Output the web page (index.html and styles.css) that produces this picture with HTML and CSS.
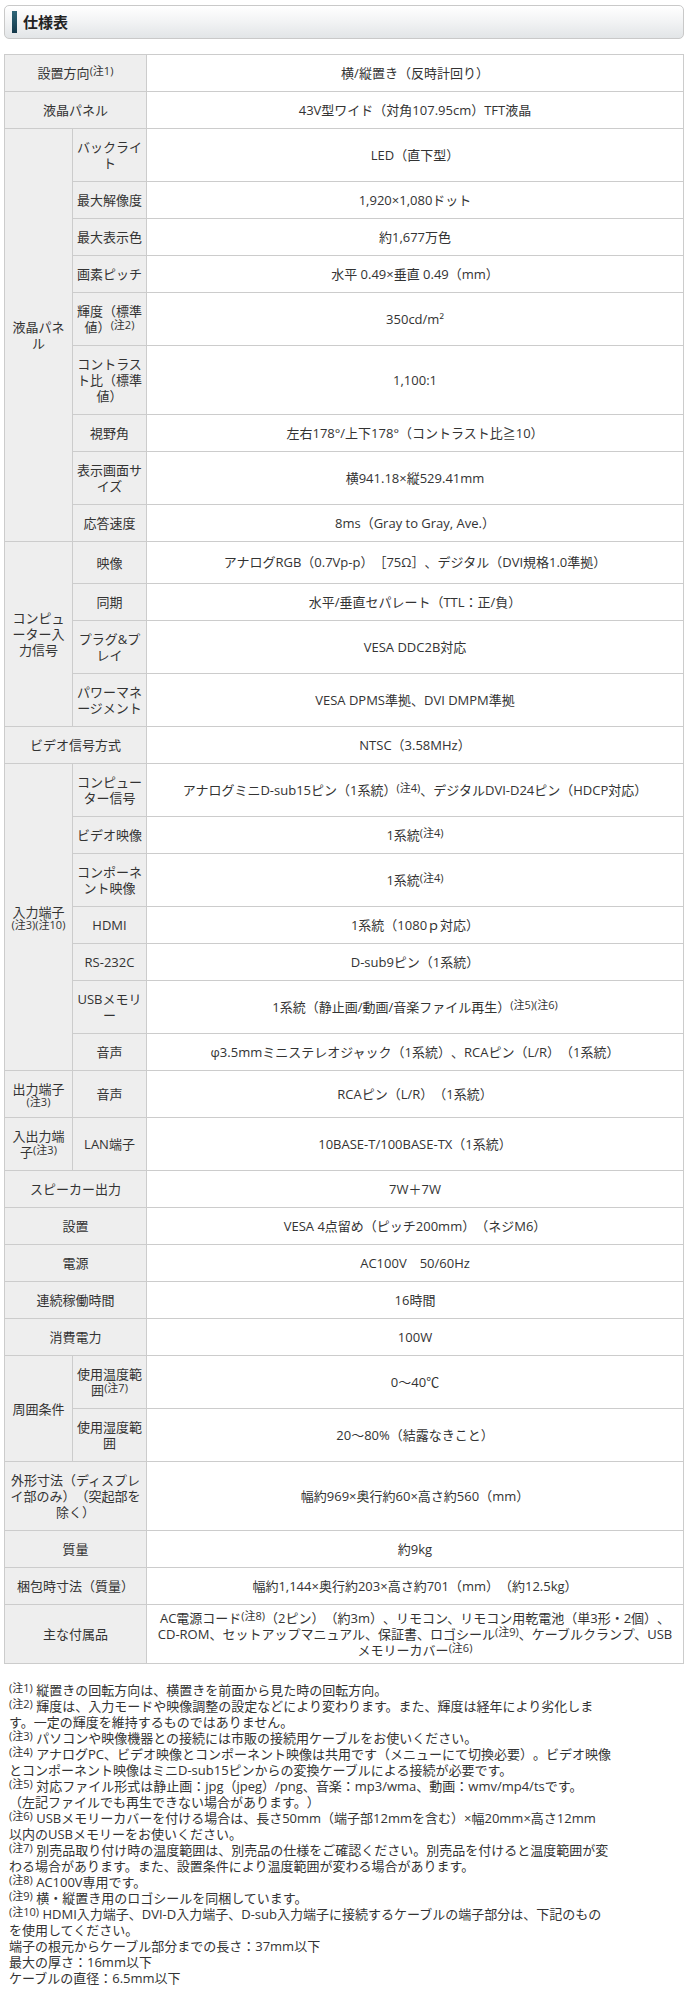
FILE: index.html
```html
<!DOCTYPE html>
<html lang="ja">
<head>
<meta charset="utf-8">
<title>仕様表</title>
<link rel="stylesheet" href="styles.css">
</head>
<body>
<div class="page">
  <div class="heading">
    <span class="heading-bar"></span>
    <h2 class="heading-title">仕様表</h2>
  </div>

  <table class="spec">
    <colgroup><col class="c1"><col class="c2"><col class="c3"></colgroup>
    <tbody>
      <tr><th colspan="2">設置方向<sup class="n">(注1)</sup></th><td>横/縦置き（反時計回り）</td></tr>
      <tr><th colspan="2">液晶パネル</th><td>43V型ワイド（対角107.95cm）TFT液晶</td></tr>
      <tr><th rowspan="9">液晶パネ<br>ル</th><th>バックライ<br>ト</th><td>LED（直下型）</td></tr>
      <tr><th>最大解像度</th><td>1,920×1,080ドット</td></tr>
      <tr><th>最大表示色</th><td>約1,677万色</td></tr>
      <tr><th>画素ピッチ</th><td>水平 0.49×垂直 0.49（mm）</td></tr>
      <tr><th>輝度（標準<br>値）<sup class="n">(注2)</sup></th><td>350cd/m²</td></tr>
      <tr><th>コントラス<br>ト比（標準<br>値）</th><td>1,100:1</td></tr>
      <tr><th>視野角</th><td>左右178°/上下178°（コントラスト比≧10）</td></tr>
      <tr><th>表示画面サ<br>イズ</th><td>横941.18×縦529.41mm</td></tr>
      <tr><th>応答速度</th><td>8ms（Gray to Gray, Ave.）</td></tr>
      <tr><th rowspan="4">コンピュ<br>ーター入<br>力信号</th><th>映像</th><td class="tall">アナログRGB（0.7Vp-p）［75Ω］、デジタル（DVI規格1.0準拠）</td></tr>
      <tr><th>同期</th><td>水平/垂直セパレート（TTL：正/負）</td></tr>
      <tr><th>プラグ&amp;プ<br>レイ</th><td>VESA DDC2B対応</td></tr>
      <tr><th>パワーマネ<br>ージメント</th><td>VESA DPMS準拠、DVI DMPM準拠</td></tr>
      <tr><th colspan="2">ビデオ信号方式</th><td>NTSC（3.58MHz）</td></tr>
      <tr><th rowspan="7">入力端子<span class="n-blk">(注3)(注10)</span></th><th>コンピュー<br>ター信号</th><td>アナログミニD-sub15ピン（1系統）<sup class="n">(注4)</sup>、デジタルDVI-D24ピン（HDCP対応）</td></tr>
      <tr><th>ビデオ映像</th><td>1系統<sup class="n">(注4)</sup></td></tr>
      <tr><th>コンポーネ<br>ント映像</th><td>1系統<sup class="n">(注4)</sup></td></tr>
      <tr><th>HDMI</th><td>1系統（1080ｐ対応）</td></tr>
      <tr><th>RS-232C</th><td>D-sub9ピン（1系統）</td></tr>
      <tr><th>USBメモリ<br>ー</th><td>1系統（静止画/動画/音楽ファイル再生）<sup class="n">(注5)(注6)</sup></td></tr>
      <tr><th>音声</th><td>φ3.5mmミニステレオジャック（1系統）、RCAピン（L/R）（1系統）</td></tr>
      <tr><th>出力端子<span class="n-blk">(注3)</span></th><th>音声</th><td>RCAピン（L/R）（1系統）</td></tr>
      <tr><th>入出力端<br>子<sup class="n">(注3)</sup></th><th>LAN端子</th><td>10BASE-T/100BASE-TX（1系統）</td></tr>
      <tr><th colspan="2">スピーカー出力</th><td>7W＋7W</td></tr>
      <tr><th colspan="2">設置</th><td>VESA 4点留め（ピッチ200mm）（ネジM6）</td></tr>
      <tr><th colspan="2">電源</th><td>AC100V　50/60Hz</td></tr>
      <tr><th colspan="2">連続稼働時間</th><td>16時間</td></tr>
      <tr><th colspan="2">消費電力</th><td>100W</td></tr>
      <tr><th rowspan="2">周囲条件</th><th>使用温度範<br>囲<sup class="n">(注7)</sup></th><td>0～40℃</td></tr>
      <tr><th>使用湿度範<br>囲</th><td>20～80%（結露なきこと）</td></tr>
      <tr><th colspan="2">外形寸法（ディスプレ<br>イ部のみ）（突起部を<br>除く）</th><td>幅約969×奥行約60×高さ約560（mm）</td></tr>
      <tr><th colspan="2">質量</th><td>約9kg</td></tr>
      <tr><th colspan="2">梱包時寸法（質量）</th><td>幅約1,144×奥行約203×高さ約701（mm）（約12.5kg）</td></tr>
      <tr><th colspan="2">主な付属品</th><td class="compact">AC電源コード<sup class="n">(注8)</sup>（2ピン）（約3m）、リモコン、リモコン用乾電池（単3形・2個）、<br>CD-ROM、セットアップマニュアル、保証書、ロゴシール<sup class="n">(注9)</sup>、ケーブルクランプ、USB<br>メモリーカバー<sup class="n">(注6)</sup></td></tr>
    </tbody>
  </table>

  <div class="notes">
    <p><sup class="n">(注1)</sup> 縦置きの回転方向は、横置きを前面から見た時の回転方向。</p>
    <p><sup class="n">(注2)</sup> 輝度は、入力モードや映像調整の設定などにより変わります。また、輝度は経年により劣化しま<br>す。一定の輝度を維持するものではありません。</p>
    <p><sup class="n">(注3)</sup> パソコンや映像機器との接続には市販の接続用ケーブルをお使いください。</p>
    <p><sup class="n">(注4)</sup> アナログPC、ビデオ映像とコンポーネント映像は共用です（メニューにて切換必要）。ビデオ映像<br>とコンポーネント映像はミニD-sub15ピンからの変換ケーブルによる接続が必要です。</p>
    <p><sup class="n">(注5)</sup> 対応ファイル形式は静止画：jpg（jpeg）/png、音楽：mp3/wma、動画：wmv/mp4/tsです。<br>（左記ファイルでも再生できない場合があります。）</p>
    <p><sup class="n">(注6)</sup> USBメモリーカバーを付ける場合は、長さ50mm（端子部12mmを含む）×幅20mm×高さ12mm<br>以内のUSBメモリーをお使いください。</p>
    <p><sup class="n">(注7)</sup> 別売品取り付け時の温度範囲は、別売品の仕様をご確認ください。別売品を付けると温度範囲が変<br>わる場合があります。また、設置条件により温度範囲が変わる場合があります。</p>
    <p><sup class="n">(注8)</sup> AC100V専用です。</p>
    <p><sup class="n">(注9)</sup> 横・縦置き用のロゴシールを同梱しています。</p>
    <p><sup class="n">(注10)</sup> HDMI入力端子、DVI-D入力端子、D-sub入力端子に接続するケーブルの端子部分は、下記のもの<br>を使用してください。</p>
    <p>端子の根元からケーブル部分までの長さ：37mm以下</p>
    <p>最大の厚さ：16mm以下</p>
    <p>ケーブルの直径：6.5mm以下</p>
  </div>
</div>
</body>
</html>
```

FILE: styles.css
```css
* {
  box-sizing: border-box;
}

html, body {
  margin: 0;
  padding: 0;
  background: #ffffff;
}

body {
  color: #333333;
  font-family: "Open Sans", "Noto Sans CJK JP", sans-serif;
  font-size: 13px;
  line-height: 16px;
  text-spacing-trim: space-all;
}

.page {
  padding: 5px 0 10px 4px;
}

.heading {
  width: 680px;
  height: 34px;
  border: 1px solid #c9c9c9;
  border-radius: 5px;
  background: linear-gradient(to bottom, #ffffff 0%, #f3f4f5 45%, #e2e5e7 100%);
  display: flex;
  align-items: center;
  gap: 6px;
  padding-left: 7px;
}

.heading-bar {
  display: block;
  width: 5px;
  height: 22px;
  background: linear-gradient(to bottom, #2f6678, #14384a);
}

.heading-title {
  margin: 0;
  font-size: 15px;
  font-weight: bold;
  line-height: 18px;
  color: #222222;
}

.spec {
  margin-top: 15px;
  width: 680px;
  border-collapse: collapse;
  table-layout: fixed;
}

.spec col.c1 { width: 68px; }
.spec col.c2 { width: 74px; }

.spec th,
.spec td {
  border: 1px solid #cccccc;
  text-align: center;
  vertical-align: middle;
  font-weight: normal;
}

.spec th {
  background: #eeeeee;
  padding: 10px 3px;
}

.spec td {
  background: #ffffff;
  padding: 10px 8px;
}

.spec td.tall {
  padding-top: 12px;
  padding-bottom: 13px;
}

.spec td.compact {
  padding: 5px 4px;
}

.n {
  font-size: 11px;
  line-height: 11px;
  vertical-align: top;
}

.n-blk {
  display: block;
  font-size: 11px;
  line-height: 10px;
}

.notes {
  margin-top: 18px;
  padding-left: 5px;
  width: 670px;
}

.notes p {
  margin: 0;
}
```
